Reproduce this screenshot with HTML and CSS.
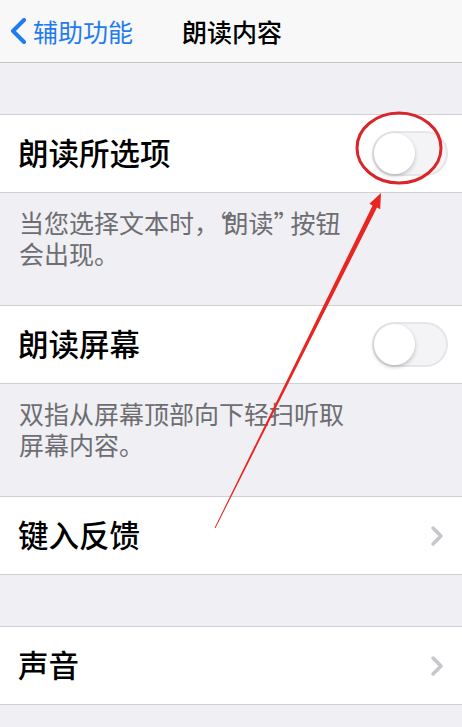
FILE: index.html
```html
<!DOCTYPE html>
<html lang="zh-CN">
<head>
  <meta charset="UTF-8" />
  <meta name="viewport" content="width=device-width, initial-scale=1.0" />
  <title>朗读内容</title>
  <link rel="stylesheet" href="styles.css">
</head>
<body>

<!-- top bar -->
<header class="navbar">
  <a class="back" href="#">
    <svg class="back-icon" width="20" height="26" viewBox="0 0 20 26">
      <path d="M16 2 L5 13 L16 24" fill="none" stroke="#1f7cf0" stroke-width="4" stroke-linecap="round" stroke-linejoin="round"/>
    </svg>
    <span>辅助功能</span>
  </a>
  <h1 class="title">朗读内容</h1>
</header>

<div class="spacer"></div>

<div class="group">
  <div class="row">
    <span class="label">朗读所选项</span>
    <span class="switch"><span class="knob"></span></span>
  </div>
</div>
<div class="footer">
  <p>当您选择文本时，<span class="quote">“</span>朗读<span class="quote">”</span>按钮</p>
  <p>会出现。</p>
</div>

<div class="group">
  <div class="row">
    <span class="label">朗读屏幕</span>
    <span class="switch"><span class="knob"></span></span>
  </div>
</div>
<div class="footer">
  <p>双指从屏幕顶部向下轻扫听取</p>
  <p>屏幕内容。</p>
</div>

<div class="group">
  <div class="row">
    <span class="label">键入反馈</span>
    <svg class="chevron" width="14" height="22" viewBox="0 0 14 22">
      <path d="M3 3 L11 11 L3 19" fill="none" stroke="#c6c6cb" stroke-width="3.5" stroke-linecap="round" stroke-linejoin="round"/>
    </svg>
  </div>
</div>

<div class="spacer"></div>

<div class="group">
  <div class="row">
    <span class="label">声音</span>
    <svg class="chevron" width="14" height="22" viewBox="0 0 14 22">
      <path d="M3 3 L11 11 L3 19" fill="none" stroke="#c6c6cb" stroke-width="3.5" stroke-linecap="round" stroke-linejoin="round"/>
    </svg>
  </div>
</div>

<!-- hand-drawn mark on top of the page -->
<svg class="markup" width="462" height="727" viewBox="0 0 462 727">
  <ellipse cx="399" cy="148" rx="42" ry="35" fill="none" stroke="#d8262b" stroke-width="3"/>
  <polygon points="215.4,528.2 214.6,527.8 372.6,205.4 369.4,203.8 381,193 380.2,209.2 377,207.6" fill="#e8261f"/>
</svg>

</body>
</html>
```

FILE: styles.css
```css
body {
  margin: 0;
  background-color: #efeff4;
  font-family: "Noto Sans CJK SC", "Noto Sans", sans-serif;
  color: #000;
  position: relative;
  min-height: 727px;
  overflow: hidden;
}

/* top bar */
.navbar {
  height: 62px;
  background-color: #f8f8f8;
  border-bottom: 1px solid #c4c4c8;
  display: flex;
  align-items: center;
}

.back {
  display: flex;
  align-items: center;
  gap: 5px;
  padding-left: 8px;
  color: #1f7cf0;
  text-decoration: none;
  font-size: 25px;
}

.back-icon {
  display: block;
}

.title {
  margin: 0 0 0 49px;
  font-size: 25px;
  font-weight: 500;
}

.spacer {
  height: 51px;
  border-bottom: 1px solid #d0d0d4;
}

.group {
  background-color: #fff;
  border-bottom: 1px solid #d0d0d4;
}

.row {
  height: 77px;
  display: flex;
  align-items: center;
  justify-content: space-between;
  padding: 0 14px 0 18px;
}

.label {
  font-size: 30.5px;
  font-weight: 500;
  margin-top: -3px;
}

/* on/off switch, always off here */
.switch {
  width: 72px;
  height: 41px;
  border: 2px solid #e6e6ea;
  border-radius: 24px;
  background-color: #f4f4f6;
  position: relative;
}

.knob {
  position: absolute;
  left: 0;
  top: 0;
  width: 41px;
  height: 41px;
  border-radius: 50%;
  background-color: #fff;
  box-shadow: 0 2px 4px rgba(0, 0, 0, 0.22);
}

.chevron {
  display: block;
  margin-right: 4px;
}

.footer {
  height: 98px;
  padding: 14px 18px 0 19px;
  border-bottom: 1px solid #d0d0d4;
}

.footer p {
  margin: 0;
  font-size: 25px;
  line-height: 31px;
  color: #6d6d72;
}

.quote {
  letter-spacing: -8px;
}

.markup {
  position: absolute;
  left: 0;
  top: 0;
  pointer-events: none;
}
```
